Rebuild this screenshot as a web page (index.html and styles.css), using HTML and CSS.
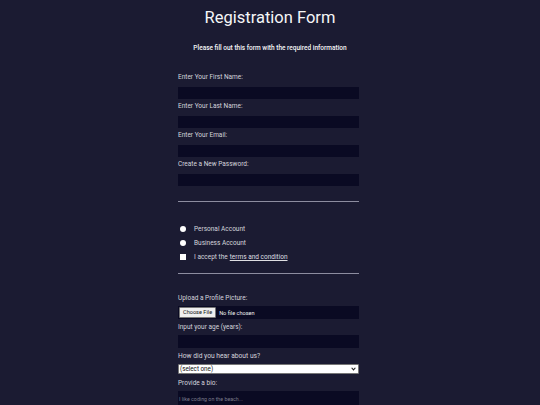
FILE: index.html
```html
<!DOCTYPE html>
<html lang="en">
<head>
<meta charset="utf-8">
<title>Registration Form</title>
<link rel="stylesheet" href="styles.css">
</head>
<body>
<h1 class="title">Registration Form</h1>
<p class="subtitle">Please fill out this form with the required information</p>
<form class="form">
  <div class="section section-fields">
    <label class="field-label">Enter Your First Name:</label>
    <input class="text-input" type="text">
    <label class="field-label">Enter Your Last Name:</label>
    <input class="text-input" type="text">
    <label class="field-label">Enter Your Email:</label>
    <input class="text-input" type="email">
    <label class="field-label">Create a New Password:</label>
    <input class="text-input" type="password">
  </div>
  <div class="rule rule-first"></div>
  <div class="section section-options">
    <label class="option"><input class="radio" type="radio" name="acc"> Personal Account</label>
    <label class="option"><input class="radio" type="radio" name="acc"> Business Account</label>
    <label class="option"><input class="check" type="checkbox"> I accept the <a class="link" href="#">terms and condition</a></label>
  </div>
  <div class="rule rule-second"></div>
  <div class="section section-extra">
    <label class="field-label">Upload a Profile Picture:</label>
    <div class="file-box"><span class="file-btn">Choose File</span><span class="file-text">No file chosen</span></div>
    <label class="field-label">Input your age (years):</label>
    <input class="text-input age-input" type="number">
    <label class="field-label big">How did you hear about us?</label>
    <div class="select-box"><span>(select one)</span><svg class="caret" viewBox="0 0 8 6" width="5" height="4"><path d="M1 1 L4 4.5 L7 1" fill="none" stroke="#222" stroke-width="1.8"/></svg></div>
    <label class="field-label">Provide a bio:</label>
    <div class="bio"><span class="placeholder">I like coding on the beach...</span></div>
  </div>
</form>
</body>
</html>
```

FILE: styles.css
```css
html, body {
  margin: 0;
  padding: 0;
}
body {
  width: 540px;
  height: 405px;
  overflow: hidden;
  background: #1b1b32;
  color: #f5f6f7;
  font-family: Roboto, "Liberation Sans", sans-serif;
}
.title {
  margin: 6px 0 0;
  font-size: 16.5px;
  font-weight: 400;
  line-height: 24px;
  text-align: center;
}
.subtitle {
  margin: 14px 0 0;
  font-size: 6.5px;
  font-weight: 500;
  line-height: 8px;
  text-align: center;
}
.form {
  width: 181px;
  padding-right: 3px;
  margin: 0 auto;
}
.section-fields {
  padding-top: 21px;
  display: flex;
  flex-direction: column;
}
.field-label {
  display: block;
  font-size: 6.5px;
  line-height: 8px;
  height: 8px;
  color: #d4d4dc;
}
.field-label.big {
  font-size: 6.7px;
}
.text-input {
  display: block;
  box-sizing: border-box;
  width: 181px;
  height: 12px;
  margin: 6px 0 3px;
  padding: 0;
  border: none;
  background: #0a0a23;
}
.rule {
  height: 1px;
  background: #8d8da0;
}
.rule-first {
  margin-top: 12px;
}
.section-options {
  padding-top: 23px;
  padding-left: 1px;
  display: flex;
  flex-direction: column;
  gap: 6px;
}
.option {
  display: flex;
  align-items: center;
  height: 8px;
  font-size: 6.5px;
  color: #d4d4dc;
}
.radio, .check {
  appearance: none;
  -webkit-appearance: none;
  margin: 0 8px 0 1px;
  width: 6px;
  height: 6px;
  background: #fff;
  border: none;
  flex: none;
}
.radio {
  border-radius: 50%;
}
.link {
  color: #dfdfe2;
  margin-left: 2px;
}
.rule-second {
  margin-top: 12px;
}
.section-extra {
  padding-top: 20px;
}
.file-box {
  display: flex;
  align-items: center;
  height: 13px;
  margin: 4px 0;
  background: #0a0a23;
  padding-left: 1px;
}
.file-btn {
  background: #efefef;
  color: #111;
  font-size: 5.6px;
  line-height: 9px;
  padding: 0 3px;
  border: 1px solid #767676;
  border-radius: 1px;
}
.file-text {
  font-size: 5.6px;
  margin-left: 3px;
  color: #f0f0f0;
}
.text-input.age-input {
  height: 13px;
  margin: 4px 0;
}
.select-box {
  display: flex;
  align-items: center;
  justify-content: space-between;
  box-sizing: border-box;
  height: 10px;
  margin: 4px 0 5px;
  padding: 0 2px 0 1px;
  background: #fff;
  border: 1px solid #767676;
  border-radius: 1px;
  font-size: 6.3px;
  color: #111;
}
.caret {
  display: block;
}
.bio {
  height: 20px;
  margin-top: 4px;
  background: #0a0a23;
  padding: 1px 1px;
  line-height: 7px;
}
.placeholder {
  font-size: 5.3px;
  color: #7a7a8a;
}
```
